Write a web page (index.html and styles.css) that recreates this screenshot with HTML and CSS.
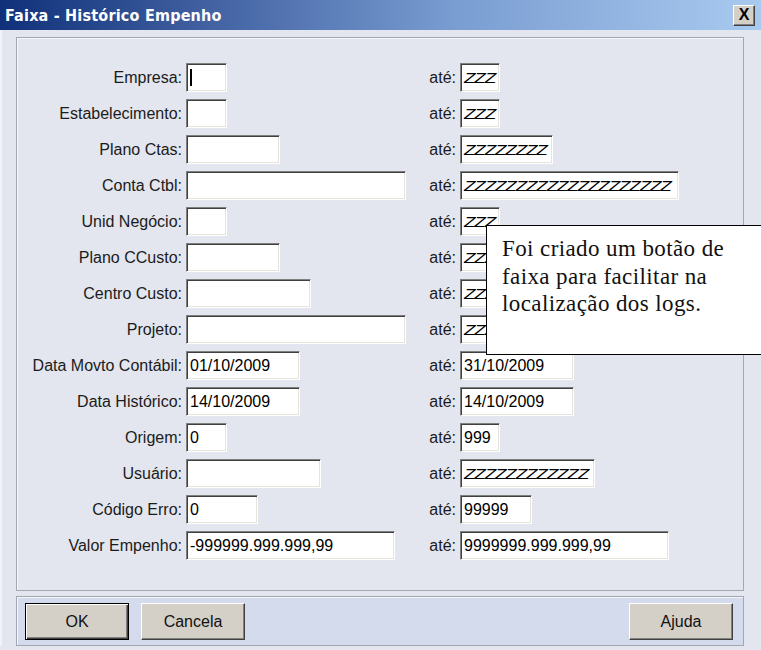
FILE: index.html
```html
<!DOCTYPE html>
<html lang="pt-BR">
<head>
    <meta charset="UTF-8">
    <meta name="viewport" content="width=device-width, initial-scale=1.0">
    <title>Faixa - Histórico Empenho</title>
    <link rel="stylesheet" href="styles.css">
</head>
<body>
    <div class="window">
        <div class="titlebar">
            <span class="title">Faixa - Histórico Empenho</span>
            <button class="close">X</button>
        </div>

        <div class="client">
            <div class="group">
                <div class="form">
                    <label class="lbl">Empresa:</label>
                    <div class="field w41"><span class="caret"></span></div>
                    <label class="lbl">até:</label>
                    <div class="field w40"><span class="zz">ZZZ</span></div>

                    <label class="lbl">Estabelecimento:</label>
                    <div class="field w41"></div>
                    <label class="lbl">até:</label>
                    <div class="field w40"><span class="zz">ZZZ</span></div>

                    <label class="lbl">Plano Ctas:</label>
                    <div class="field w94"></div>
                    <label class="lbl">até:</label>
                    <div class="field w93"><span class="zz">ZZZZZZZZ</span></div>

                    <label class="lbl">Conta Ctbl:</label>
                    <div class="field w220"></div>
                    <label class="lbl">até:</label>
                    <div class="field w219"><span class="zz">ZZZZZZZZZZZZZZZZZZZZ</span></div>

                    <label class="lbl">Unid Negócio:</label>
                    <div class="field w41"></div>
                    <label class="lbl">até:</label>
                    <div class="field w40"><span class="zz">ZZZ</span></div>

                    <label class="lbl">Plano CCusto:</label>
                    <div class="field w94"></div>
                    <label class="lbl">até:</label>
                    <div class="field w93"><span class="zz">ZZZZZZZZ</span></div>

                    <label class="lbl">Centro Custo:</label>
                    <div class="field w125"></div>
                    <label class="lbl">até:</label>
                    <div class="field w124"><span class="zz">ZZZZZZZZZZZ</span></div>

                    <label class="lbl">Projeto:</label>
                    <div class="field w220"></div>
                    <label class="lbl">até:</label>
                    <div class="field w219"><span class="zz">ZZZZZZZZZZZZZZZZZZZZ</span></div>

                    <label class="lbl">Data Movto Contábil:</label>
                    <div class="field w114">01/10/2009</div>
                    <label class="lbl">até:</label>
                    <div class="field w114">31/10/2009</div>

                    <label class="lbl">Data Histórico:</label>
                    <div class="field w114">14/10/2009</div>
                    <label class="lbl">até:</label>
                    <div class="field w114">14/10/2009</div>

                    <label class="lbl">Origem:</label>
                    <div class="field w41">0</div>
                    <label class="lbl">até:</label>
                    <div class="field w40">999</div>

                    <label class="lbl">Usuário:</label>
                    <div class="field w135"></div>
                    <label class="lbl">até:</label>
                    <div class="field w135"><span class="zz">ZZZZZZZZZZZZ</span></div>

                    <label class="lbl">Código Erro:</label>
                    <div class="field w72">0</div>
                    <label class="lbl">até:</label>
                    <div class="field w72">99999</div>

                    <label class="lbl">Valor Empenho:</label>
                    <div class="field w209">-999999.999.999,99</div>
                    <label class="lbl">até:</label>
                    <div class="field w209">9999999.999.999,99</div>
                </div>
            </div>

            <div class="buttons">
                <button class="btn default">OK</button>
                <button class="btn">Cancela</button>
                <button class="btn help">Ajuda</button>
            </div>
        </div>

        <div class="note">
            Foi criado um botão de<br>
            faixa para facilitar na<br>
            localização dos logs.
        </div>
    </div>
</body>
</html>
```

FILE: styles.css
```css
body {
    margin: 0;
    font-family: "Liberation Sans", Arial, sans-serif;
    font-size: 16px;
    background: #e3e6ee;
    overflow: hidden;
}

.window {
    position: relative;
    width: 761px;
    height: 650px;
    overflow: hidden;
    background: #e3e6ee;
}

/* barra de titulo */
.titlebar {
    height: 30px;
    display: flex;
    align-items: center;
    justify-content: space-between;
    padding: 0 6px 0 5px;
    background: linear-gradient(to right, #10307a, #3d5d9e 25%, #7a9dd2 60%, #a9caef);
}

.title {
    color: #ffffff;
    font-family: "DejaVu Sans Condensed", "DejaVu Sans", sans-serif;
    font-stretch: condensed;
    font-weight: bold;
    font-size: 16px;
    letter-spacing: 0.2px;
}

.close {
    width: 22px;
    height: 21px;
    padding: 0;
    background: #d4d0c8;
    border: 1px solid;
    border-color: #ffffff #404040 #404040 #ffffff;
    box-shadow: inset -1px -1px 0 #808080;
    font-family: "Liberation Sans", Arial, sans-serif;
    font-weight: bold;
    font-size: 16px;
    line-height: 18px;
    color: #000;
}

.client {
    padding: 7px 17px 0 14px;
    border-left: 2px solid #f2f3f7;
}

/* caixa do formulario */
.group {
    height: 554px;
    box-sizing: border-box;
    border: 1px solid #a2a7b2;
    box-shadow: inset 1px 1px 0 #f7f8fa;
    padding: 25px 0 0 1px;
}

.form {
    display: grid;
    grid-template-columns: 164px 232px 34px 1fr;
    grid-auto-rows: 29px;
    column-gap: 4px;
    row-gap: 7px;
}

.lbl {
    align-self: center;
    text-align: right;
    white-space: nowrap;
    color: #1b1b1b;
}

.field {
    justify-self: start;
    height: 29px;
    box-sizing: border-box;
    display: flex;
    align-items: center;
    padding: 0 3px;
    background: #ffffff;
    border: 1px solid;
    border-color: #7f7f7f #ffffff #ffffff #7f7f7f;
    box-shadow: inset 1px 1px 0 #404040, inset -1px -1px 0 #e6e3da;
    white-space: nowrap;
    overflow: hidden;
    color: #000;
}

.w40 { width: 40px; }
.w41 { width: 41px; }
.w72 { width: 72px; }
.w93 { width: 93px; }
.w94 { width: 94px; }
.w114 { width: 114px; }
.w124 { width: 124px; }
.w125 { width: 125px; }
.w135 { width: 135px; }
.w209 { width: 209px; }
.w219 { width: 219px; }
.w220 { width: 220px; }

.caret {
    width: 2px;
    height: 17px;
    background: #000;
}

/* texto de mascara ZZZ */
.zz {
    display: inline-block;
    font-style: italic;
    font-size: 15.5px;
    letter-spacing: -1px;
    transform: scaleX(1.22);
    transform-origin: left center;
    color: #000;
}

/* barra de botoes */
.buttons {
    margin-top: 5px;
    height: 50px;
    box-sizing: border-box;
    display: flex;
    align-items: flex-start;
    gap: 12px;
    padding: 6px 10px 0 8px;
    background: #d3dbec;
    border: 1px solid #a2a7b2;
    box-shadow: inset 1px 1px 0 #f4f6fa;
}

.btn {
    width: 104px;
    height: 37px;
    padding: 0;
    background: #d4d0c8;
    border: 1px solid;
    border-color: #ffffff #404040 #404040 #ffffff;
    box-shadow: inset -1px -1px 0 #808080;
    font-family: "Liberation Sans", Arial, sans-serif;
    font-size: 16px;
    color: #111;
}

.btn.default {
    border-color: #000;
    box-shadow: inset 1px 1px 0 #ffffff, inset -1px -1px 0 #404040, inset -2px -2px 0 #808080;
}

.btn.help {
    margin-left: auto;
}

/* anotacao sobreposta */
.note {
    position: absolute;
    left: 486px;
    top: 225px;
    width: 290px;
    height: 130px;
    box-sizing: border-box;
    padding: 9px 0 0 15px;
    background: #ffffff;
    border: 1px solid #000;
    font-family: "Liberation Serif", "Times New Roman", serif;
    font-size: 23px;
    line-height: 27.5px;
    letter-spacing: 0.4px;
    white-space: nowrap;
    color: #111;
}
```
